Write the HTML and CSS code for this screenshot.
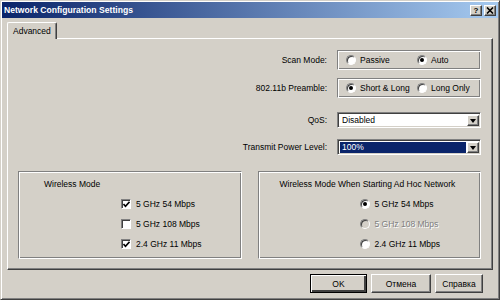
FILE: index.html
```html
<!DOCTYPE html>
<html lang="en">
<head>
    <meta charset="UTF-8">
    <title>Network Configuration Settings</title>
    <link rel="stylesheet" href="styles.css">
</head>
<body>
    <div class="window">
        <div class="titlebar">
            <div class="title">Network Configuration Settings</div>
            <div class="title-btns">
                <div class="title-btn">?</div>
                <div class="title-btn close">
                    <svg width="8" height="7" viewBox="0 0 8 7"><path d="M1 0.5 L7 6.5 M7 0.5 L1 6.5" stroke="#000" stroke-width="1.6"/></svg>
                </div>
            </div>
        </div>

        <div class="tabs">
            <div class="tab">Advanced</div>
        </div>

        <div class="panel">
            <div class="settings">
                <div class="row">
                    <div class="label">Scan Mode:</div>
                    <div class="radio-box">
                        <div class="opt"><span class="radio"></span>Passive</div>
                        <div class="opt"><span class="radio on"></span>Auto</div>
                    </div>
                </div>
                <div class="row">
                    <div class="label">802.11b Preamble:</div>
                    <div class="radio-box">
                        <div class="opt"><span class="radio on"></span>Short &amp; Long</div>
                        <div class="opt"><span class="radio"></span>Long Only</div>
                    </div>
                </div>
                <div class="row row-qos">
                    <div class="label">QoS:</div>
                    <div class="select">
                        <div class="select-value">Disabled</div>
                        <div class="select-btn"><span class="arrow"></span></div>
                    </div>
                </div>
                <div class="row row-power">
                    <div class="label">Transmit Power Level:</div>
                    <div class="select">
                        <div class="select-value active">100%</div>
                        <div class="select-btn"><span class="arrow"></span></div>
                    </div>
                </div>
            </div>

            <div class="groups">
                <div class="group">
                    <div class="group-title">Wireless Mode</div>
                    <div class="items items-check">
                        <div class="item"><span class="check on"><svg width="7" height="7" viewBox="0 0 7 7"><path d="M0.5 3 L2.5 5.2 L6.5 0.8" fill="none" stroke="#000" stroke-width="1.6"/></svg></span>5 GHz 54 Mbps</div>
                        <div class="item"><span class="check"></span>5 GHz 108 Mbps</div>
                        <div class="item"><span class="check on"><svg width="7" height="7" viewBox="0 0 7 7"><path d="M0.5 3 L2.5 5.2 L6.5 0.8" fill="none" stroke="#000" stroke-width="1.6"/></svg></span>2.4 GHz 11 Mbps</div>
                    </div>
                </div>
                <div class="group group-adhoc">
                    <div class="group-title">Wireless Mode When Starting Ad Hoc Network</div>
                    <div class="items items-radio">
                        <div class="item"><span class="radio on"></span>5 GHz 54 Mbps</div>
                        <div class="item disabled"><span class="radio off"></span>5 GHz 108 Mbps</div>
                        <div class="item"><span class="radio"></span>2.4 GHz 11 Mbps</div>
                    </div>
                </div>
            </div>
        </div>

        <div class="actions">
            <button class="btn btn-ok">OK</button>
            <button class="btn btn-cancel">Отмена</button>
            <button class="btn btn-help">Справка</button>
        </div>
    </div>
</body>
</html>
```

FILE: styles.css
```css
* {
    margin: 0;
    padding: 0;
    box-sizing: border-box;
}

body {
    width: 500px;
    height: 300px;
    overflow: hidden;
    font-family: 'Liberation Sans', Arial, sans-serif;
    font-size: 8.5px;
    color: #000;
    background: #d4d0c8;
}

.window {
    width: 500px;
    height: 300px;
    background: #d4d0c8;
    border: 1px solid;
    border-color: #d4d0c8 #404040 #404040 #d4d0c8;
    box-shadow: inset 1px 1px #fff, inset -1px -1px #808080;
    padding: 1px;
    display: flex;
    flex-direction: column;
}

.titlebar {
    height: 16px;
    background: linear-gradient(90deg, #0a246a, #a6caf0);
    display: flex;
    align-items: center;
    justify-content: space-between;
    padding: 0 2px 0 2px;
}

.title {
    color: #fff;
    font-weight: 700;
    font-size: 8.6px;
}

.title-btns {
    display: flex;
    gap: 2px;
}

.title-btn {
    width: 12px;
    height: 11px;
    background: #d4d0c8;
    border: 1px solid;
    border-color: #fff #404040 #404040 #fff;
    box-shadow: inset -1px -1px #808080;
    font-weight: 700;
    font-size: 8px;
    line-height: 9px;
    text-align: center;
    display: flex;
    align-items: center;
    justify-content: center;
}

.tabs {
    display: flex;
    padding: 4px 5px 0;
    position: relative;
    z-index: 1;
    margin-bottom: -1px;
}

.tab {
    width: 50px;
    height: 17px;
    background: #d4d0c8;
    border: 1px solid;
    border-color: #fff #404040 transparent #fff;
    border-bottom: none;
    box-shadow: inset -1px 0 #808080;
    border-radius: 2px 2px 0 0;
    padding: 3px 0 0 5px;
}

.panel {
    margin: 0 5px;
    height: 232px;
    border: 1px solid;
    border-color: #fff #404040 #404040 #fff;
    box-shadow: inset -1px -1px #808080;
    padding: 11px 11px 0 10px;
}

.settings {
    display: flex;
    flex-direction: column;
    align-items: flex-end;
}

.row {
    display: flex;
    align-items: center;
    gap: 10px;
    margin-bottom: 8px;
}

.row-qos {
    margin-top: 6px;
    margin-bottom: 11px;
}

.row-power {
    margin-bottom: 16px;
}

.label {
    text-align: right;
}

.radio-box {
    width: 144px;
    height: 20px;
    border: 1px solid;
    border-color: #808080 #fff #fff #808080;
    box-shadow: inset 1px 1px #fff, inset -1px -1px #808080;
    display: grid;
    grid-template-columns: 71px 1fr;
    align-items: center;
    padding-left: 8px;
}

.opt,
.item {
    display: flex;
    align-items: center;
    gap: 4px;
    white-space: nowrap;
}

.radio {
    width: 10px;
    height: 10px;
    border-radius: 50%;
    background: #fff;
    border: 1px solid;
    border-color: #808080 #fff #fff #808080;
    box-shadow: inset 1px 1px #404040, 0 0 0 0.5px #d4d0c8;
    display: flex;
    align-items: center;
    justify-content: center;
    flex-shrink: 0;
}

.radio.on::after {
    content: '';
    width: 4px;
    height: 4px;
    border-radius: 50%;
    background: #000;
}

.radio.off {
    background: #d4d0c8;
}

.select {
    width: 144px;
    height: 16px;
    background: #fff;
    border: 1px solid;
    border-color: #808080 #fff #fff #808080;
    box-shadow: inset 1px 1px #404040, inset -1px -1px #d4d0c8;
    display: flex;
    padding: 2px 1px 1px 2px;
}

.select-value {
    flex: 1;
    padding-left: 2px;
    line-height: 11px;
}

.select-value.active {
    background: #0a246a;
    color: #fff;
    margin-right: 1px;
}

.select-btn {
    width: 12px;
    background: #d4d0c8;
    border: 1px solid;
    border-color: #fff #404040 #404040 #fff;
    box-shadow: inset -1px -1px #808080;
    display: flex;
    align-items: center;
    justify-content: center;
}

.arrow {
    width: 0;
    height: 0;
    border-left: 3.5px solid transparent;
    border-right: 3.5px solid transparent;
    border-top: 4px solid #000;
}

.groups {
    display: grid;
    grid-template-columns: 1fr 1fr;
    gap: 16px;
}

.group {
    height: 88px;
    border: 1px solid;
    border-color: #808080 #fff #fff #808080;
    box-shadow: inset 1px 1px #fff, inset -1px -1px #808080;
    padding: 6px 0 0 25px;
}

.group-adhoc {
    padding-left: 21px;
}

.group-title {
    line-height: 12px;
}

.items {
    margin-top: 4px;
    margin-left: 77px;
}

.items-radio {
    margin-left: 80px;
}

.item {
    height: 20px;
    gap: 5px;
}

.item.disabled {
    color: #808080;
    text-shadow: 1px 1px #fff;
}

.check {
    width: 10px;
    height: 10px;
    background: #fff;
    border: 1px solid;
    border-color: #808080 #fff #fff #808080;
    box-shadow: inset 1px 1px #404040;
    display: flex;
    align-items: center;
    justify-content: center;
}

.actions {
    display: flex;
    justify-content: flex-end;
    gap: 4px;
    padding: 4px 15px 0 0;
}

.btn {
    height: 19px;
    background: #d4d0c8;
    font-family: 'Liberation Sans', Arial, sans-serif;
    font-size: 8.5px;
    border: 1px solid;
    border-color: #fff #404040 #404040 #fff;
    box-shadow: inset -1px -1px #808080;
}

.btn-ok {
    width: 57px;
    border-color: #000;
    box-shadow: inset 1px 1px #fff, inset -2px -2px #404040;
}

.btn-cancel {
    width: 60px;
}

.btn-help {
    width: 48px;
}
```
